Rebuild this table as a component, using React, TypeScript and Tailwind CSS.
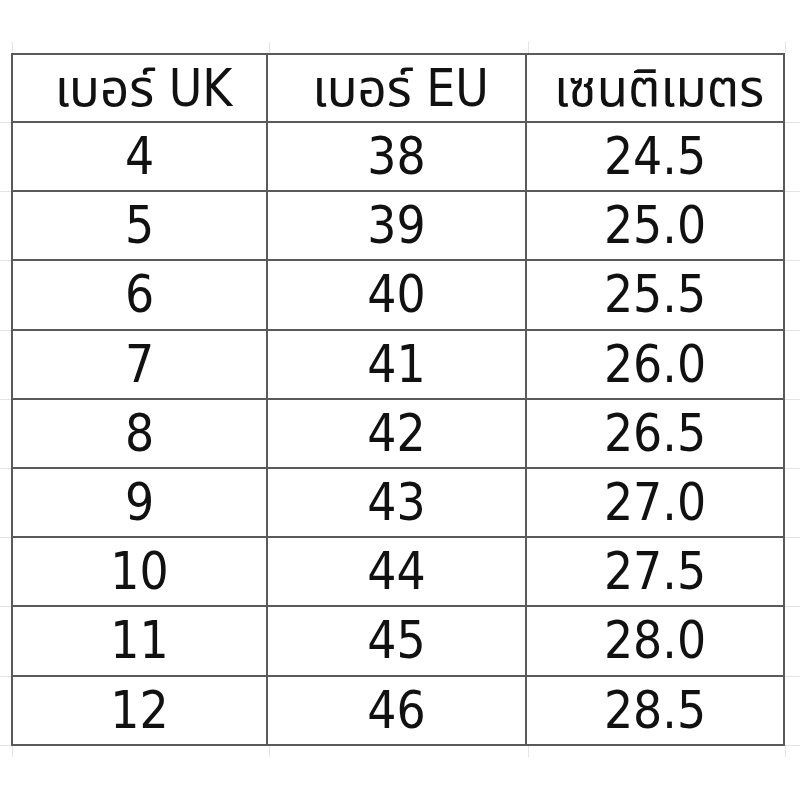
const headers = ['เบอร์ UK', 'เบอร์ EU', 'เซนติเมตร'];

const sizes: [string, string, string][] = [
  ['4', '38', '24.5'],
  ['5', '39', '25.0'],
  ['6', '40', '25.5'],
  ['7', '41', '26.0'],
  ['8', '42', '26.5'],
  ['9', '43', '27.0'],
  ['10', '44', '27.5'],
  ['11', '45', '28.0'],
  ['12', '46', '28.5'],
];

const colWidths = ['w-[257px]', 'w-[259px]', 'w-[258px]'];

function Row({ cells, first, header }: { cells: string[]; first?: boolean; header?: boolean }) {
  return (
    <div className={`flex ${header ? 'h-[70px]' : 'h-[69.2px]'}`}>
      {/* spreadsheet gridline left of the table */}
      <div className="w-[11px] shrink-0 border-b border-[#e4e4e4]" />
      {cells.map((text, i) => (
        <div
          key={i}
          className={`${colWidths[i]} shrink-0 flex items-center justify-center border-b-2 border-r-2 border-[#5a5a5a] ${
            i === 0 ? 'border-l-2' : ''
          } ${first ? 'border-t-2' : ''} ${header ? 'pl-2' : ''}`}
        >
          <span className="text-[51px] leading-none text-[#111]">{text}</span>
        </div>
      ))}
      <div className="flex-1 border-b border-[#e4e4e4]" />
    </div>
  );
}

function EdgeRow() {
  return (
    <div className="flex h-[11px] ml-[12px]">
      {colWidths.map((w, i) => (
        <div key={i} className={`${w} shrink-0 border-l border-[#e4e4e4] ${i === 2 ? 'border-r' : ''}`} />
      ))}
    </div>
  );
}

export default function App() {
  return (
    <div
      className="w-[800px] h-[800px] bg-white pt-[42px] overflow-hidden"
      style={{ fontFamily: '"DejaVu Sans Condensed", "DejaVu Sans", "Noto Sans Thai", Loma, Tahoma, sans-serif' }}
    >
      <EdgeRow />
      <Row cells={headers} first header />
      {sizes.map((row) => (
        <Row key={row[0]} cells={row} />
      ))}
      <EdgeRow />
    </div>
  );
}
